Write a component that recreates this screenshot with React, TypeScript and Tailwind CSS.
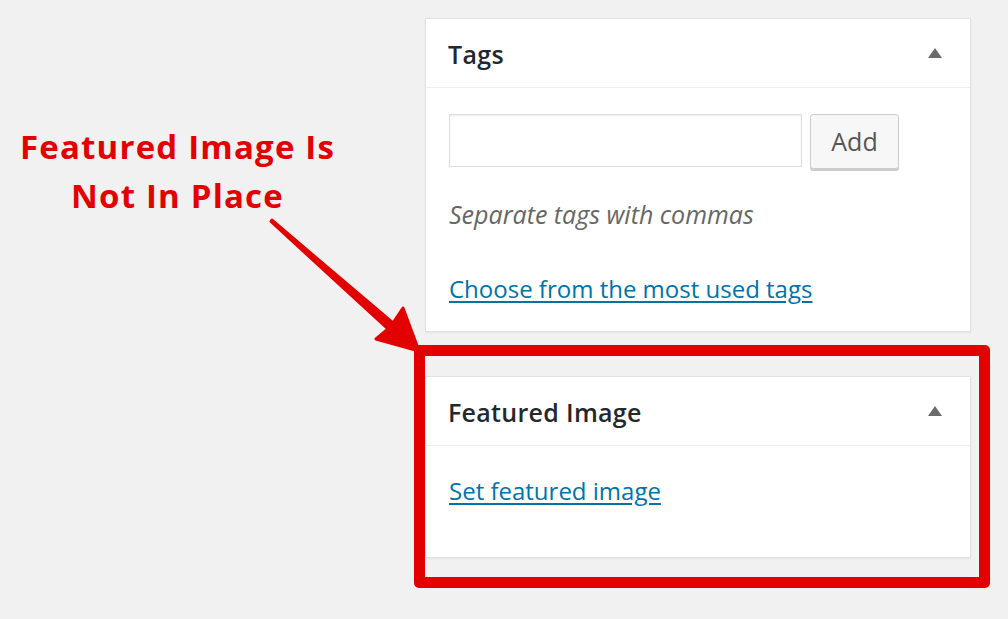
import { ReactNode } from 'react';

const Caret = () => (
  <svg width="16" height="12" viewBox="0 0 16 12" className="mr-[27px]">
    <path d="M8 1 L15 11 L1 11 Z" fill="#6b6b6b" />
  </svg>
);

const Box = ({ title, children, className }: { title: string; children: ReactNode; className?: string }) => (
  <div className={`border border-[#e2e2e2] bg-white shadow-[0_1px_2px_rgba(0,0,0,0.06)] ${className ?? ''}`}>
    <div className="flex h-[69px] items-center justify-between border-b border-[#eeeeee] pl-[22px]">
      <h2 className="pt-[3px] text-[25px] font-semibold tracking-[0.3px] text-[#23282d]">{title}</h2>
      <Caret />
    </div>
    {children}
  </div>
);

export default function App() {
  return (
    <div className="relative flex h-[619px] w-[1008px] overflow-hidden bg-[#f1f1f1] font-['Open_Sans',sans-serif]">
      <div className="w-[355px] pt-[122px] text-center text-[33px] leading-[49px] font-bold tracking-[1.2px] text-[#e30000]">
        <p>Featured Image Is</p>
        <p>Not In Place</p>
      </div>

      <div className="ml-[70px] flex w-[546px] flex-col gap-[44px] pt-[18px]">
        <Box title="Tags" className="h-[314px]">
          <div className="px-[23px] pt-[26px]">
            <div className="flex items-start gap-[8px]">
              <input className="h-[53px] w-[353px] border border-[#dddddd] bg-white shadow-[inset_0_1px_2px_rgba(0,0,0,0.07)] outline-none" />
              <button className="h-[55px] w-[89px] rounded-[3px] border border-[#cccccc] bg-[#f7f7f7] text-[25px] text-[#555555] shadow-[0_2px_0_#cccccc]">
                Add
              </button>
            </div>
            <p className="mt-[30px] text-[25px] leading-[30px] text-[#666666] italic">Separate tags with commas</p>
            <p className="mt-[45px] text-[24px] leading-[30px]">
              <a className="text-[#0073aa] underline underline-offset-[3px]" href="#">
                Choose from the most used tags
              </a>
            </p>
          </div>
        </Box>

        <Box title="Featured Image" className="h-[182px]">
          <div className="px-[23px] pt-[30px]">
            <p className="text-[24px] leading-[30px]">
              <a className="text-[#0073aa] underline underline-offset-[3px]" href="#">
                Set featured image
              </a>
            </p>
          </div>
        </Box>
      </div>

      {/* annotation overlay */}
      <div className="absolute top-[345px] left-[414px] h-[243px] w-[576px] rounded-[5px] border-[11px] border-[#e30000]" />
      <svg className="absolute top-0 left-0" width="1008" height="619" viewBox="0 0 1008 619">
        <path
          d="M272 220 L273.5 221.5 L393 323 L403 308 L419 351 L376 339 L388 329 L271 221.5 Z"
          fill="#e30000"
          stroke="#e30000"
          strokeWidth="3"
          strokeLinejoin="round"
        />
      </svg>
    </div>
  );
}
